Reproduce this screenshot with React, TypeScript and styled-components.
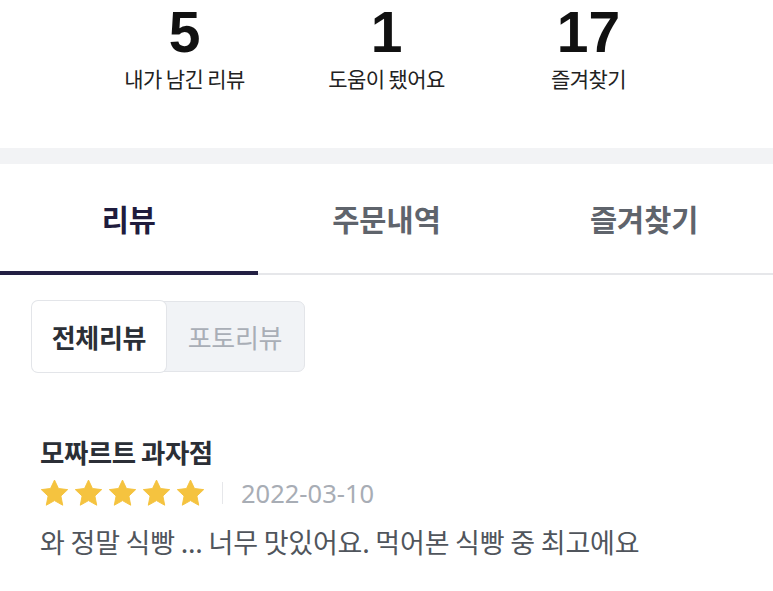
import React from "react";
import styled, { createGlobalStyle } from "styled-components";

const Global = createGlobalStyle`
  html, body { margin: 0; padding: 0; background: #fff; }
  body { font-family: "Noto Sans CJK KR", "Noto Sans", sans-serif; }
`;

const Page = styled.div`
  width: 773px;
  display: flex;
  flex-direction: column;
`;

const Stats = styled.div`
  display: flex;
  justify-content: center;
  padding-top: 2px;
  height: 148px;
  box-sizing: border-box;
`;

const Stat = styled.div`
  width: 202px;
  display: flex;
  flex-direction: column;
  align-items: center;
`;

const StatNum = styled.div`
  font-family: "Liberation Sans", Arial, sans-serif;
  font-weight: 700;
  font-size: 57px;
  line-height: 60px;
  color: #111;
`;

const StatLabel = styled.div`
  font-size: 21px;
  line-height: 28px;
  color: #222;
  margin-top: 2px;
  letter-spacing: -0.6px;
`;

const Band = styled.div`
  height: 16px;
  background: #f2f3f5;
`;

const Tabs = styled.div`
  display: flex;
  border-bottom: 2px solid #e6e7ea;
`;

const Tab = styled.div<{ $active?: boolean }>`
  flex: 1;
  height: 111px;
  box-sizing: border-box;
  display: flex;
  align-items: center;
  justify-content: center;
  font-size: 29.5px;
  font-weight: 700;
  color: ${(p) => (p.$active ? "#1f1c3d" : "#5f646c")};
  border-bottom: 4px solid ${(p) => (p.$active ? "#232043" : "transparent")};
  margin-bottom: -2px;
  padding-top: 1px;
`;

const Content = styled.div`
  padding: 26px 32px 0 32px;
  display: flex;
  flex-direction: column;
`;

const Segment = styled.div`
  display: flex;
  width: 273px;
  height: 71px;
  box-sizing: border-box;
  border: 1px solid #e3e5e9;
  border-radius: 7px;
  background: #f1f3f6;
`;

const SegBtn = styled.div<{ $active?: boolean }>`
  flex: ${(p) => (p.$active ? "0 0 134px" : "1")};
  display: flex;
  align-items: center;
  justify-content: center;
  font-size: 26px;
  font-weight: ${(p) => (p.$active ? 700 : 400)};
  color: ${(p) => (p.$active ? "#2b2f36" : "#a9aeb6")};
  background: ${(p) => (p.$active ? "#fff" : "transparent")};
  border-radius: 6px;
  box-shadow: ${(p) => (p.$active ? "0 0 0 1px #e3e5e9" : "none")};
  margin: ${(p) => (p.$active ? "-1px 0 -1px -1px" : "0")};
  letter-spacing: -0.3px;
`;

const Review = styled.div`
  padding: 62px 8px 0 8px;
  display: flex;
  flex-direction: column;
`;

const Store = styled.div`
  font-size: 26.5px;
  font-weight: 700;
  color: #2b2f36;
  line-height: 36px;
  letter-spacing: -0.5px;
`;

const Meta = styled.div`
  display: flex;
  align-items: center;
  margin-top: 5px;
  height: 36px;
`;

const Stars = styled.div`
  display: flex;
  gap: 5px;
`;

const Divider = styled.div`
  width: 1px;
  height: 22px;
  background: #e6e7ea;
  margin: 0 18px 0 17px;
`;

const DateText = styled.div`
  font-family: "Noto Sans", sans-serif;
  font-size: 25.5px;
  color: #a8adb5;
`;

const Body = styled.div`
  margin-top: 12px;
  font-size: 27px;
  line-height: 38px;
  color: #50555c;
  letter-spacing: -0.2px;
`;

const Star = () => (
  <svg width="29" height="28" viewBox="0 0 24 23">
    <path
      d="M12 0.8l3.3 7 7.6 0.9-5.6 5.3 1.5 7.6L12 17.8l-6.8 3.8 1.5-7.6L1.1 8.7l7.6-0.9z"
      fill="#f5c33f"
      stroke="#f5c33f"
      strokeWidth="0.8"
      strokeLinejoin="round"
    />
  </svg>
);

export default function App() {
  return (
    <Page>
      <Global />
      <Stats>
        <Stat>
          <StatNum>5</StatNum>
          <StatLabel>내가 남긴 리뷰</StatLabel>
        </Stat>
        <Stat>
          <StatNum>1</StatNum>
          <StatLabel>도움이 됐어요</StatLabel>
        </Stat>
        <Stat>
          <StatNum>17</StatNum>
          <StatLabel>즐겨찾기</StatLabel>
        </Stat>
      </Stats>
      <Band />
      <Tabs>
        <Tab $active>리뷰</Tab>
        <Tab>주문내역</Tab>
        <Tab>즐겨찾기</Tab>
      </Tabs>
      <Content>
        <Segment>
          <SegBtn $active>전체리뷰</SegBtn>
          <SegBtn>포토리뷰</SegBtn>
        </Segment>
        <Review>
          <Store>모짜르트 과자점</Store>
          <Meta>
            <Stars>
              <Star />
              <Star />
              <Star />
              <Star />
              <Star />
            </Stars>
            <Divider />
            <DateText>2022-03-10</DateText>
          </Meta>
          <Body>와 정말 식빵 ... 너무 맛있어요. 먹어본 식빵 중 최고에요</Body>
        </Review>
      </Content>
    </Page>
  );
}
